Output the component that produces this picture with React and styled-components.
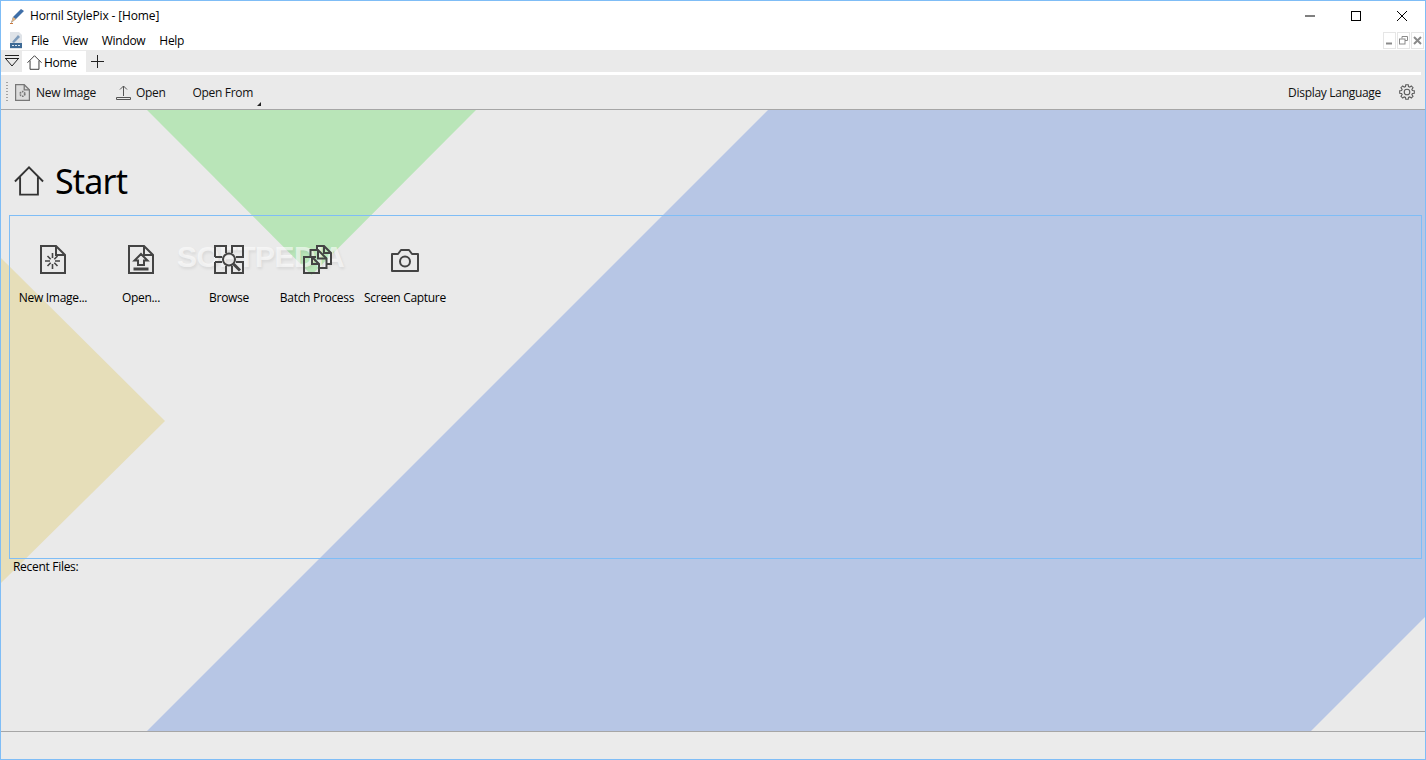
import React from "react"
import styled, { createGlobalStyle } from "styled-components"

const Global = createGlobalStyle`
  html, body { margin: 0; padding: 0; height: 100%; overflow: hidden; }
  body {
    font-family: "Open Sans", "Noto Sans", "Liberation Sans", sans-serif;
    font-size: 12px;
    letter-spacing: -0.3px;
    color: #000;
  }
`

const Win = styled.div`
  width: 1426px;
  height: 760px;
  box-sizing: border-box;
  border: 1px solid #7fbdf6;
  display: flex;
  flex-direction: column;
  background: #fff;
`

const TitleBar = styled.div`
  height: 29px;
  flex: none;
  display: flex;
  align-items: center;
  padding-left: 8px;
`

const Title = styled.span`
  margin-left: 5px;
  flex: 1;
  letter-spacing: -0.14px;
`

const WinBtn = styled.button`
  width: 46px;
  height: 29px;
  padding: 0;
  border: 0;
  background: none;
  display: flex;
  align-items: center;
  justify-content: center;
`

const MenuBar = styled.div`
  height: 20px;
  flex: none;
  display: flex;
  align-items: center;
  padding-left: 8px;
`

const MenuItem = styled.span`
  padding: 0 7px;
  &:first-of-type { margin-left: 1px; }
`

const MdiBtns = styled.div`
  margin-left: auto;
  margin-right: 1px;
  display: flex;
  gap: 1px;
`

const MdiBtn = styled.div`
  width: 13px;
  height: 17px;
  box-sizing: border-box;
  border: 1px solid #e6e6e6;
  background: #fff;
  display: flex;
  align-items: center;
  justify-content: center;
`

const TabBar = styled.div`
  height: 22px;
  flex: none;
  background: #eaeaea;
  display: flex;
  align-items: stretch;
`

const TabMenu = styled.div`
  width: 21px;
  display: flex;
  align-items: center;
  justify-content: center;
`

const Tab = styled.div`
  width: 64px;
  margin-top: 1px;
  background: #fff;
  display: flex;
  align-items: center;
  padding: 1px 0 0 5px;
  box-sizing: border-box;
  gap: 2px;
`

const AddTab = styled.div`
  width: 22px;
  display: flex;
  align-items: center;
  justify-content: center;
`

const TabLine = styled.div`
  height: 3px;
  flex: none;
  background: #eaeaea;
  padding-right: 4px;
  &::before {
    content: "";
    display: block;
    height: 3px;
    background: #fff;
  }
`

const Toolbar = styled.div`
  height: 34px;
  flex: none;
  background: #eaeaea;
  border-bottom: 1px solid #a6a6a6;
  display: flex;
  align-items: center;
  padding-left: 5px;
  position: relative;
`

const Grip = styled.div`
  width: 2px;
  height: 22px;
  margin-right: 7px;
  background-image: radial-gradient(#a3a3a3 0.7px, transparent 0.8px);
  background-size: 2px 3px;
`

const ToolBtn = styled.div`
  display: flex;
  align-items: center;
  gap: ${(p) => p.$iconGap || 6}px;
  margin-left: ${(p) => p.$gap || 0}px;
  color: #111;
`

const ToolRight = styled(ToolBtn)`
  margin-left: auto;
`

const Corner = styled.span`
  position: absolute;
  left: 256px;
  bottom: 3px;
  width: 0;
  height: 0;
  border-left: 4px solid transparent;
  border-bottom: 4px solid #222;
`

const Gear = styled.div`
  margin-left: 18px;
  margin-right: 10px;
  display: flex;
`

const Canvas = styled.div`
  flex: 1;
  min-height: 0;
  background: #eaeaea;
  position: relative;
  display: flex;
  flex-direction: column;
  overflow: hidden;
`

const Shapes = styled.svg`
  position: absolute;
  left: 0;
  top: 0;
`

const Heading = styled.div`
  position: relative;
  height: 105px;
  flex: none;
  display: flex;
  align-items: center;
  box-sizing: border-box;
  padding: 36px 0 0 13px;
`

const HeadText = styled.h1`
  margin: 0 0 0 11px;
  font-family: "Noto Sans", "Open Sans", sans-serif;
  font-size: 34px;
  font-weight: 400;
  letter-spacing: -0.8px;
  line-height: 46px;
`

const Group = styled.div`
  position: relative;
  flex: none;
  height: 344px;
  margin: 0 3px 0 8px;
  box-sizing: border-box;
  border: 1px solid #7fbdf6;
  display: flex;
  align-items: flex-start;
  padding-top: 25px;
`

const Tile = styled.div`
  width: 88px;
  display: flex;
  flex-direction: column;
  align-items: center;
  white-space: nowrap;
  &:first-child { margin-left: -1px; }
`

const TileIcon = styled.div`
  width: 36px;
  height: 36px;
  display: flex;
  align-items: center;
  justify-content: center;
  margin-bottom: 12px;
`

const Watermark = styled.div`
  position: absolute;
  left: 176px;
  top: 130px;
  font-family: "Liberation Sans", sans-serif;
  font-weight: 700;
  font-size: 30px;
  letter-spacing: -0.5px;
  color: rgba(255, 255, 255, 0.62);
  text-shadow: 1px 2px 3px rgba(0, 0, 0, 0.08);
`

const Recent = styled.div`
  position: relative;
  margin: 0 0 0 12px;
  line-height: 16px;
`

const Status = styled.div`
  height: 28px;
  flex: none;
  box-sizing: border-box;
  background: #ebebeb;
  border-top: 1px solid #a6a6a6;
`

const HomeIcon = ({ size = 16, sw = 1, c = "#333" }) => (
  <svg width={size} height={size} viewBox="0 0 32 32" fill="none" stroke={c} strokeWidth={sw}>
    <path d="M1 16.5 16 1.5l15 15M6.5 12v18.5h19V12" />
  </svg>
)

const Page = ({ children }) => (
  <svg width="26" height="29" viewBox="0 0 26 29" fill="none" stroke="#444" strokeWidth="2">
    <path d="M1 1h15l9 9v18H1z" />
    <path d="M16 1v9h9" />
    {children}
  </svg>
)

const Burst = () => (
  <path
    strokeWidth="1.6"
    d="M12.500 8v5M12.500 19v5M5 16h5M15 16h5M7.500 11l3.200 3.200M14.300 17.800l3.200 3.200M7.500 21l3.200-3.200M14.300 14.200l3.200-3.200"
  />
)

const ArrowUp = () => (
  <g>
    <path d="M13 9l6.500 6.500H16V20H10v-4.500H6.500z" />
    <rect x="5.500" y="22.500" width="15" height="3" fill="#444" stroke="none" />
  </g>
)

const BrowseIcon = () => (
  <svg width="30" height="29" viewBox="0 0 30 29" fill="none" stroke="#444" strokeWidth="2">
    <path d="M1 12V1h11v7M1 12h7" />
    <path d="M18 8V1h11v11h-7" />
    <path d="M1 17v11h11v-7M1 17h7" />
    <path d="M18 21v7h11V17h-7" />
    <circle cx="15" cy="14.500" r="6" />
    <path d="M19.500 19 26 25.500" strokeWidth="3" />
  </svg>
)

const BatchIcon = () => (
  <svg width="29" height="29" viewBox="0 0 29 29" fill="none" stroke="#444" strokeWidth="2">
    <path d="M14 5V1h7l7 7v11h-4" />
    <path d="M21 1v7h7" />
    <path d="M13 12 7.500 12V5H15l8.500 8.500V23H17" />
    <path d="M15 5v8.500h8.500" />
    <path d="M1 12h8l7 7v9H1z" />
    <path d="M9 12v7h7" />
  </svg>
)

const CameraIcon = () => (
  <svg width="28" height="26" viewBox="0 0 28 26" fill="none" stroke="#444" strokeWidth="2">
    <path d="M1 8h6l3-4h8l3 4h6v17H1z" strokeLinejoin="round" />
    <circle cx="14" cy="15.500" r="5" />
  </svg>
)

// eight toothed gear outline
const gearPoints = (() => {
  const pts = []
  for (let i = 0; i < 8; i++) {
    const a = (i * Math.PI) / 4
    const step = [
      [-0.27, 5.6],
      [-0.17, 7.4],
      [0.17, 7.4],
      [0.27, 5.6],
    ]
    step.forEach(([d, r]) => {
      pts.push(`${(8 + r * Math.cos(a + d)).toFixed(2)},${(8 + r * Math.sin(a + d)).toFixed(2)}`)
    })
  }
  return pts.join(" ")
})()

const tiles = [
  { label: "New Image...", icon: <Page><Burst /></Page> },
  { label: "Open...", icon: <Page><ArrowUp /></Page> },
  { label: "Browse", icon: <BrowseIcon /> },
  { label: "Batch Process", icon: <BatchIcon /> },
  { label: "Screen Capture", icon: <CameraIcon /> },
]

function App() {
  return (
    <Win>
      <Global />
      <TitleBar>
        <svg width="16" height="16" viewBox="0 0 16 16">
          <path d="M2 15 4 9 12 1l3 2-8 8z" fill="#3f6fa8" />
          <path d="M2 15l2-6 3 2z" fill="#e0b483" />
          <path d="M1 15.500h3" stroke="#c9793e" strokeWidth="1" />
        </svg>
        <Title>Hornil StylePix - [Home]</Title>
        <WinBtn>
          <svg width="10" height="10" viewBox="0 0 10 10"><path d="M0 5h10" stroke="#000" /></svg>
        </WinBtn>
        <WinBtn>
          <svg width="10" height="10" viewBox="0 0 10 10"><rect x=".5" y=".5" width="9" height="9" fill="none" stroke="#000" /></svg>
        </WinBtn>
        <WinBtn>
          <svg width="10" height="10" viewBox="0 0 10 10"><path d="M0 0l10 10M10 0 0 10" stroke="#000" /></svg>
        </WinBtn>
      </TitleBar>
      <MenuBar>
        <svg width="14" height="17" viewBox="0 0 14 17">
          <path d="M1 0h9l3 3v14H1z" fill="#dfe3e8" />
          <path d="M3 10 9 3l2 2-6 6z" fill="#7f9cbb" />
          <rect x="1" y="11" width="12" height="5" fill="#3d6a96" />
          <path d="M3 13.500h8" stroke="#dbe5ef" strokeDasharray="2 1" />
        </svg>
        <MenuItem>File</MenuItem>
        <MenuItem>View</MenuItem>
        <MenuItem>Window</MenuItem>
        <MenuItem>Help</MenuItem>
        <MdiBtns>
          <MdiBtn>
            <svg width="9" height="9" viewBox="0 0 9 9"><path d="M1 7.500h6" stroke="#8a8a8a" strokeWidth="2" /></svg>
          </MdiBtn>
          <MdiBtn>
            <svg width="9" height="9" viewBox="0 0 9 9" fill="none" stroke="#8a8a8a"><path d="M3 2.500V.5h5.500v4H6" /><rect x=".5" y="3" width="5.500" height="5" /></svg>
          </MdiBtn>
          <MdiBtn>
            <svg width="9" height="9" viewBox="0 0 9 9"><path d="M1 1l7 7M8 1 1 8" stroke="#8a8a8a" strokeWidth="2" /></svg>
          </MdiBtn>
        </MdiBtns>
      </MenuBar>
      <TabBar>
        <TabMenu>
          <svg width="14" height="14" viewBox="0 0 14 14" fill="none" stroke="#222"><path d="M0 1.500h14M0 4.500h14M1 5l6 7 6-7" /></svg>
        </TabMenu>
        <Tab>
          <HomeIcon size={15} sw={2} />
          Home
        </Tab>
        <AddTab>
          <svg width="13" height="13" viewBox="0 0 13 13"><path d="M6.500 0v13M0 6.500h13" stroke="#222" /></svg>
        </AddTab>
      </TabBar>
      <TabLine />
      <Toolbar>
        <Grip />
        <ToolBtn>
          <svg width="15" height="17" viewBox="0 0 26 29" fill="#dcdcdc" stroke="#777" strokeWidth="2.2">
            <path d="M1 1h15l9 9v18H1z" />
            <path d="M16 1v9h9" fill="none" />
            <circle cx="13" cy="17" r="4" fill="none" strokeWidth="3" strokeDasharray="2.500 1.500" />
          </svg>
          New Image
        </ToolBtn>
        <ToolBtn $gap={20} $iconGap={5}>
          <svg width="15" height="15" viewBox="0 0 15 15" fill="none" stroke="#555">
            <path d="M7.500 11V1M4 4.500 7.500 1 11 4.500" />
            <path d="M.5 14.500v-2h14v2z" />
          </svg>
          Open
        </ToolBtn>
        <ToolBtn $gap={27}>Open From</ToolBtn>
        <Corner />
        <ToolRight>Display Language</ToolRight>
        <Gear>
          <svg width="16" height="16" viewBox="0 0 16 16" fill="none" stroke="#5a5a5a" strokeWidth="1.100">
            <polygon points={gearPoints} />
            <circle cx="8" cy="8" r="2.800" />
          </svg>
        </Gear>
      </Toolbar>
      <Canvas>
        <Shapes width="1424" height="622" viewBox="0 0 1424 622">
          <polygon points="146,0 475,0 310.5,165" fill="#b9e5b8" />
          <polygon points="0,148 164,311 0,473" fill="#e6deb9" />
          <polygon points="767,0 1424,0 1424,507 1310,621 1309,622 145,622" fill="#b7c6e5" />
        </Shapes>
        <Heading>
          <HomeIcon size={30} sw={2} />
          <HeadText>Start</HeadText>
        </Heading>
        <Watermark>SOFTPEDIA</Watermark>
        <Group>
          {tiles.map((t) => (
            <Tile key={t.label}>
              <TileIcon>{t.icon}</TileIcon>
              {t.label}
            </Tile>
          ))}
        </Group>
        <Recent>Recent Files:</Recent>
      </Canvas>
      <Status />
    </Win>
  )
}

export default App
